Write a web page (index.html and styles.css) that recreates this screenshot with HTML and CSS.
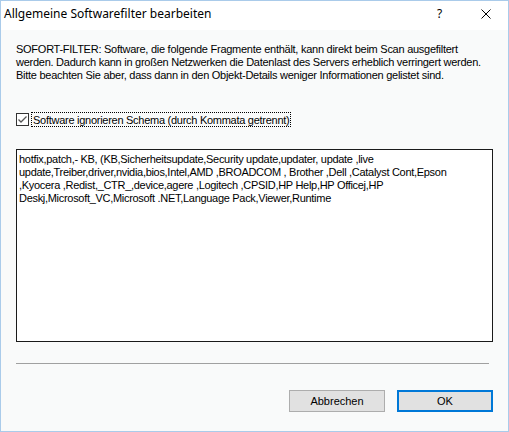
FILE: index.html
```html
<!DOCTYPE html>
<html lang="de">
<head>
<meta charset="utf-8">
<title>Allgemeine Softwarefilter bearbeiten</title>
<link rel="stylesheet" href="styles.css">
</head>
<body>
<div class="window">
  <div class="titlebar">
    <span class="title">Allgemeine Softwarefilter bearbeiten</span>
    <span class="help">?</span>
    <span class="close">
      <svg width="10" height="10" viewBox="0 0 10 10"><path d="M0.5 0.5 L9.5 9.5 M9.5 0.5 L0.5 9.5" stroke="#000" stroke-width="1" fill="none"/></svg>
    </span>
  </div>
  <div class="content">
    <p class="desc">SOFORT-FILTER: Software, die folgende Fragmente enthält, kann direkt beim Scan ausgefiltert<br>werden. Dadurch kann in großen Netzwerken die Datenlast des Servers erheblich verringert werden.<br>Bitte beachten Sie aber, dass dann in den Objekt-Details weniger Informationen gelistet sind.</p>
    <div class="checkrow">
      <span class="checkbox">
        <svg width="11" height="11" viewBox="0 0 11 11"><path d="M1.5 5.5 L4 8 L9.5 2.5" stroke="#555" stroke-width="1.3" fill="none"/></svg>
      </span>
      <span class="checklabel">Software ignorieren Schema (durch Kommata getrennt)</span>
    </div>
    <div class="textbox">hotfix,patch,- KB, (KB,Sicherheitsupdate,Security update,updater, update ,live<br>update,Treiber,driver,nvidia,bios,Intel,AMD ,BROADCOM , Brother ,Dell ,Catalyst Cont,Epson<br>,Kyocera ,Redist,_CTR_,device,agere ,Logitech ,CPSID,HP Help,HP Officej,HP<br>Deskj,Microsoft_VC,Microsoft .NET,Language Pack,Viewer,Runtime</div>
    <div class="separator"></div>
    <div class="buttons">
      <button class="btn">Abbrechen</button>
      <button class="btn btn-default">OK</button>
    </div>
  </div>
</div>
</body>
</html>
```
FILE: styles.css
```css
html, body {
  margin: 0;
  padding: 0;
}
body {
  width: 509px;
  height: 432px;
  overflow: hidden;
  font-family: "Liberation Sans", Arial, sans-serif;
  font-size: 11px;
  color: #000;
}
.window {
  box-sizing: border-box;
  width: 509px;
  height: 432px;
  border: 1px solid #aacbea;
  background: #f9fafa;
  display: flex;
  flex-direction: column;
}
.titlebar {
  height: 29px;
  background: #fff;
  display: flex;
  align-items: center;
  flex-shrink: 0;
}
.title {
  font-family: "Noto Sans", "Liberation Sans", sans-serif;
  font-size: 12px;
  margin-left: 3px;
  flex: 1;
  position: relative;
  top: -2px;
}
.help {
  font-family: "Noto Sans", "Liberation Sans", sans-serif;
  font-size: 12px;
  width: 10px;
  margin-right: 34px;
  position: relative;
  top: -2px;
}
.close {
  width: 10px;
  height: 10px;
  margin-right: 17px;
  display: flex;
  position: relative;
  top: -2px;
}
.content {
  padding: 13px 15px 0 15px;
  display: flex;
  flex-direction: column;
}
.desc {
  margin: 0;
  line-height: 13px;
  white-space: nowrap;
  letter-spacing: -0.26px;
}
.checkrow {
  margin-top: 30px;
  height: 15px;
  display: flex;
  align-items: center;
}
.checkbox {
  box-sizing: border-box;
  width: 13px;
  height: 13px;
  border: 1px solid #333;
  background: #fff;
  display: flex;
  align-items: center;
  justify-content: center;
}
.checklabel {
  margin-left: 2px;
  padding: 0 1px 0 1px;
  height: 15px;
  line-height: 14px;
  box-sizing: border-box;
  border: 1px dotted #000;
  white-space: nowrap;
  letter-spacing: -0.27px;
}
.textbox {
  margin-top: 22px;
  box-sizing: border-box;
  height: 193px;
  border: 1px solid #1a1a1a;
  background: #fff;
  padding: 3px 2px;
  line-height: 13px;
  white-space: nowrap;
  overflow: hidden;
  letter-spacing: -0.3px;
}
.separator {
  margin-top: 21px;
  margin-right: 4px;
  height: 1px;
  background: #a0a0a0;
}
.buttons {
  margin-top: 26px;
  display: flex;
  justify-content: flex-end;
  gap: 12px;
}
.btn {
  box-sizing: border-box;
  width: 96px;
  height: 22px;
  margin: 0;
  padding: 0;
  border: 1px solid #adadad;
  background: #e1e1e1;
  font-family: "Liberation Sans", Arial, sans-serif;
  font-size: 11px;
  color: #000;
}
.btn-default {
  border: 2px solid #0078d7;
}
```
